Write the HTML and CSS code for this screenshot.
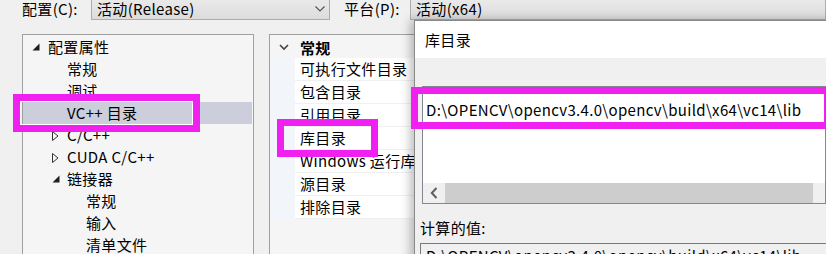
FILE: index.html
```html
<!DOCTYPE html>
<html>
<head>
<meta charset="utf-8">
<link rel="stylesheet" href="styles.css">
</head>
<body>
<div class="screen">
  <div class="topbar">
    <span class="lbl lbl-config">配置(C):</span>
    <div class="combo combo-config">
      <span>活动(Release)</span>
      <svg class="chev" width="10" height="6" viewBox="0 0 10 6"><path d="M0.5 0.5 L5 5 L9.5 0.5" fill="none" stroke="#555" stroke-width="1.2"/></svg>
    </div>
    <span class="lbl lbl-platform">平台(P):</span>
    <div class="combo combo-platform"><span>活动(x64)</span></div>
  </div>

  <div class="main">
    <div class="panel tree">
      <div class="row lv0"><svg class="exp-open" width="8" height="8" viewBox="0 0 8 8"><path d="M7.5 0.5 L7.5 7.5 L0.5 7.5 Z" fill="#1e1e1e"/></svg><span>配置属性</span></div>
      <div class="row lv1">常规</div>
      <div class="row lv1">调试</div>
      <div class="row lv1 selected">VC++ 目录</div>
      <div class="row lv1c"><svg class="exp-closed" width="7" height="10" viewBox="0 0 7 10"><path d="M0.5 0.5 L6 5 L0.5 9.5 Z" fill="none" stroke="#333" stroke-width="1"/></svg><span>C/C++</span></div>
      <div class="row lv1c"><svg class="exp-closed" width="7" height="10" viewBox="0 0 7 10"><path d="M0.5 0.5 L6 5 L0.5 9.5 Z" fill="none" stroke="#333" stroke-width="1"/></svg><span>CUDA C/C++</span></div>
      <div class="row lv1c"><svg class="exp-open2" width="8" height="8" viewBox="0 0 8 8"><path d="M7.5 0.5 L7.5 7.5 L0.5 7.5 Z" fill="#1e1e1e"/></svg><span>链接器</span></div>
      <div class="row lv2">常规</div>
      <div class="row lv2">输入</div>
      <div class="row lv2">清单文件</div>
    </div>

    <div class="panel props">
      <div class="group"><svg class="gchev" width="10" height="7" viewBox="0 0 10 7"><path d="M1 1 L5 5 L9 1" fill="none" stroke="#444" stroke-width="1.6"/></svg><span>常规</span></div>
      <div class="prow"><span class="gut"></span><span class="pname">可执行文件目录</span></div>
      <div class="prow"><span class="gut"></span><span class="pname">包含目录</span></div>
      <div class="prow"><span class="gut"></span><span class="pname">引用目录</span></div>
      <div class="prow"><span class="gut"></span><span class="pname">库目录</span></div>
      <div class="prow"><span class="gut"></span><span class="pname">Windows 运行库目录</span></div>
      <div class="prow"><span class="gut"></span><span class="pname">源目录</span></div>
      <div class="prow"><span class="gut"></span><span class="pname">排除目录</span></div>
    </div>
  </div>

  <div class="dialog">
    <div class="dlg-head">库目录</div>
    <div class="dlg-body">
      <div class="listbox">
        <div class="entry">D:\OPENCV\opencv3.4.0\opencv\build\x64\vc14\lib</div>
        <div class="fill"></div>
        <div class="hscroll">
          <svg class="sarrow" width="8" height="12" viewBox="0 0 8 12"><path d="M6.5 1 L1.8 6 L6.5 11" fill="none" stroke="#606060" stroke-width="2"/></svg>
          <div class="thumb"></div>
        </div>
      </div>
      <div class="calc-lbl">计算的值:</div>
      <div class="calcbox">D:\OPENCV\opencv3.4.0\opencv\build\x64\vc14\lib</div>
    </div>
  </div>

  <div class="mark mark-tree"></div>
  <div class="mark mark-prop"></div>
  <div class="mark mark-edit"></div>
</div>
</body>
</html>
```

FILE: styles.css
```css
* { box-sizing: border-box; }
html, body { margin: 0; padding: 0; }
body {
  width: 826px;
  height: 254px;
  overflow: hidden;
  background: #f0f0f0;
  font-family: "Noto Sans CJK SC", "Noto Sans", sans-serif;
  font-size: 15px;
  letter-spacing: 0.33px;
  color: #000;
}
.screen {
  position: relative;
  width: 826px;
  height: 254px;
  overflow: hidden;
}
.topbar {
  display: flex;
  align-items: flex-start;
  height: 20px;
}
.lbl { line-height: 18px; white-space: nowrap; }
.lbl-config { margin-left: 22px; width: 69px; }
.lbl-platform { margin-left: 14px; width: 66px; }
.combo {
  height: 21px;
  margin-top: -1px;
  border: 1px solid #adadad;
  background: linear-gradient(#e9e9e9, #dcdcdc);
  display: flex;
  align-items: center;
  line-height: 18px;
  padding: 0 0 1px 5px;
  white-space: nowrap;
}
.combo-config { width: 239px; position: relative; }
.combo-config .chev { position: absolute; right: 4px; top: 6px; }
.combo-platform { flex: 1; }

.main {
  display: flex;
  margin-top: 14px;
  margin-left: 22px;
}
.panel {
  border: 1px solid #a0a0a0;
  background: #f5f5f5;
  height: 260px;
  padding-top: 1px;
}
.tree { width: 232px; }
.props { width: 220px; margin-left: 15px; }

.row {
  height: 22px;
  line-height: 22px;
  display: flex;
  align-items: center;
  white-space: nowrap;
  margin-right: 1px;
}
.lv0 { padding-left: 9px; }
.lv0 .exp-open { margin-right: 8px; }
.lv1 { padding-left: 44px; }
.lv1c { padding-left: 29px; }
.lv1c .exp-closed { margin-right: 8px; margin-top: 1px; }
.lv1c .exp-open2 { margin-right: 7px; }
.lv2 { padding-left: 63px; }
.selected { background: #cccedb; }

.group {
  height: 22px;
  display: flex;
  align-items: center;
  font-weight: bold;
  padding-left: 9px;
}
.group .gchev { margin-right: 11px; }
.prow {
  display: flex;
  height: 23px;
}
.gut { width: 25px; background: #f2f5f9; flex: none; }
.pname {
  flex: 1;
  background: #fff;
  border-bottom: 1px solid #f0f0f0;
  line-height: 22px;
  padding-left: 5px;
  white-space: nowrap;
  overflow: hidden;
}

.dialog {
  position: absolute;
  left: 414px;
  top: 20px;
  width: 420px;
  height: 250px;
  background: #f0f0f0;
  border-top: 1px solid #8a8a8a;
  border-left: 1px solid #8a8a8a;
  box-shadow: -4px 0 9px rgba(0,0,0,0.25);
}
.dlg-head {
  height: 37px;
  background: #fff;
  line-height: 37px;
  padding-left: 10px;
}
.dlg-body { padding-left: 7px; }
.listbox {
  margin-top: 28px;
  width: 404px;
  height: 118px;
  border: 1px solid #828790;
  background: #fff;
  display: flex;
  flex-direction: column;
}
.entry {
  margin-top: 8px;
  height: 30px;
  line-height: 30px;
  padding-left: 3px;
  white-space: nowrap;
}
.fill { flex: 1; }
.hscroll {
  height: 20px;
  background: #f0f0f0;
  display: flex;
  align-items: center;
}
.sarrow { margin-left: 7px; margin-right: 7px; }
.thumb { width: 368px; height: 20px; background: #cdcdcd; }
.calc-lbl {
  margin-top: 14px;
  line-height: 20px;
  margin-left: -2px;
}
.calcbox {
  margin-top: 5px;
  margin-left: -2px;
  width: 410px;
  height: 40px;
  border: 1px solid #7a7a7a;
  background: #f0f0f0;
  padding: 2px 0 0 5px;
  line-height: 20px;
  white-space: nowrap;
}

.mark {
  position: absolute;
  border: 7px solid #f020f0;
  box-shadow: inset 0 0 0 1px #fff;
}
.mark-tree { left: 13px; top: 94px; width: 187px; height: 38px; }
.mark-prop { left: 277px; top: 119px; width: 101px; height: 38px; box-shadow: none; }
.mark-edit { left: 411px; top: 87px; width: 420px; height: 42px; box-shadow: none; }
```
